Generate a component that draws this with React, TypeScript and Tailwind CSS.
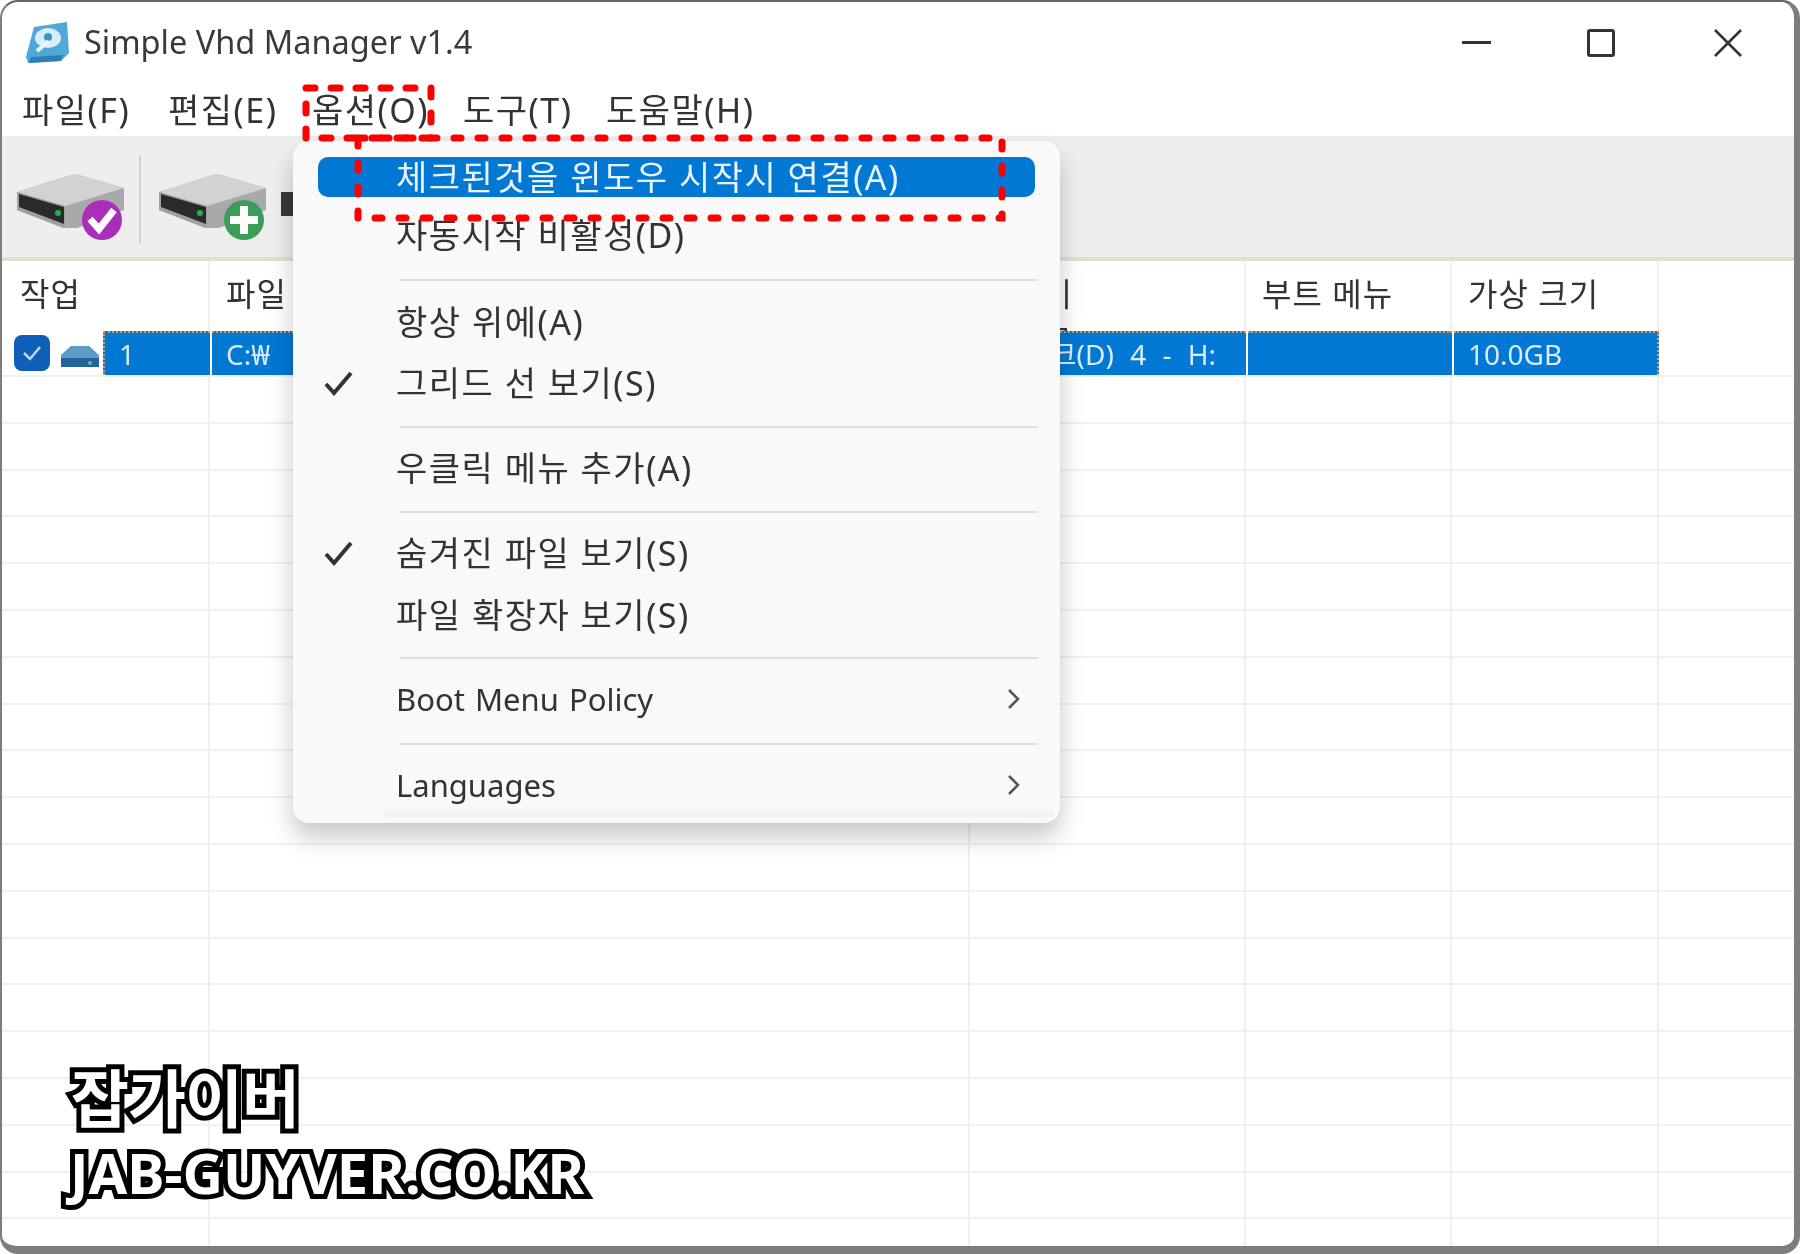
const KR = "font-['Noto_Sans','Noto_Sans_CJK_KR',sans-serif]";
const KO_MENU = "text-[34px] tracking-[1.5px]";
const LATIN_MENU = "text-[31px] [word-spacing:2px]";
const HEAD = "border-r-[2px] border-[#f0f0f0] pt-[9px]";
const SEL = "flex items-center whitespace-nowrap bg-[#0078d4] border-t-[2px] border-dotted border-[#e09a45]";

const gridRows = Array.from({ length: 19 });
const columns = ["w-[208px]", "w-[760px]", "w-[276px]", "w-[206px]", "w-[207px]", "flex-1"];

type MenuRow =
  | { type: "sep"; className: string }
  | { type: "item"; label: string; checked?: boolean; sub?: boolean; active?: boolean; className: string };

const menuRows: MenuRow[] = [
  { type: "item", label: "체크된것을 윈도우 시작시 연결(A)", active: true, className: `h-[40px] ${KO_MENU}` },
  { type: "item", label: "자동시작 비활성(D)", className: `mt-[18px] h-[40px] ${KO_MENU}` },
  { type: "sep", className: "mt-[24px]" },
  { type: "item", label: "항상 위에(A)", className: `mt-[21px] h-[40px] ${KO_MENU}` },
  { type: "item", label: "그리드 선 보기(S)", checked: true, className: `mt-[21px] h-[40px] ${KO_MENU}` },
  { type: "sep", className: "mt-[23px]" },
  { type: "item", label: "우클릭 메뉴 추가(A)", className: `mt-[20px] h-[40px] ${KO_MENU}` },
  { type: "sep", className: "mt-[23px]" },
  { type: "item", label: "숨겨진 파일 보기(S)", checked: true, className: `mt-[20px] h-[40px] ${KO_MENU}` },
  { type: "item", label: "파일 확장자 보기(S)", className: `mt-[22px] h-[40px] ${KO_MENU}` },
  { type: "sep", className: "mt-[22px]" },
  { type: "item", label: "Boot Menu Policy", sub: true, className: `mt-[20px] h-[40px] ${LATIN_MENU}` },
  { type: "sep", className: "mt-[24px]" },
  { type: "item", label: "Languages", sub: true, className: `mt-[20px] h-[40px] ${LATIN_MENU}` },
];

function Drive({ badge }: { badge?: "check" | "plus" }) {
  return (
    <svg width="112" height="70" viewBox="0 0 112 70" className="shrink-0">
      <path d="M2 20 L56 3 Q60 2 64 3 L109 16 L109 38 L62 56 L48 56 L2 38 Z" fill="#a9a9ab" />
      <path d="M2 20 L56 3 Q60 2 64 3 L109 16 L50 34 Z" fill="#d2d2d5" />
      <path d="M2 20 L50 34 L50 56 L2 38 Z" fill="#a0a0a0" />
      <path d="M4 22 L49 35 L49 52 L4 35 Z" fill="#2a2a2a" />
      <circle cx="43" cy="41" r="3" fill="#19b83f" />
      {badge === "check" && (
        <g>
          <circle cx="87" cy="48" r="20" fill="#a92fb8" />
          <path d="M75 47 L84 57 L99 38" fill="none" stroke="#fff" strokeWidth="7" />
        </g>
      )}
      {badge === "plus" && (
        <g>
          <circle cx="87" cy="48" r="20" fill="#3d9c58" />
          <path d="M87 34 V62 M73 48 H101" fill="none" stroke="#fff" strokeWidth="8" />
        </g>
      )}
    </svg>
  );
}

function CheckMark() {
  return (
    <svg width="30" height="26" viewBox="0 0 30 26">
      <path d="M2 14 L10 23 L27 3" fill="none" stroke="#333" strokeWidth="4" />
    </svg>
  );
}

function Chevron() {
  return (
    <svg width="14" height="22" viewBox="0 0 14 22">
      <path d="M2 2 L11 11 L2 20" fill="none" stroke="#555" strokeWidth="2.5" />
    </svg>
  );
}

function OptionsMenu() {
  return (
    <div className="absolute left-[293px] top-[141px] h-[682px] w-[767px] rounded-[16px] bg-[#f9f9f9] pt-[16px] shadow-[0_14px_24px_rgba(0,0,0,0.22)]">
      {menuRows.map((row, i) =>
        row.type === "sep" ? (
          <div key={i} className={`ml-[107px] mr-[22px] h-[2px] bg-[#dfdfdf] ${row.className}`} />
        ) : (
          <div
            key={i}
            className={`mx-[25px] flex items-center rounded-[10px] ${row.className} ${row.active ? "bg-[#0078d4] text-[#e8f3fb]" : "text-[#333]"}`}
          >
            <div className="flex w-[78px] justify-start pl-[6px]">{row.checked && <CheckMark />}</div>
            <span className="flex-1 whitespace-nowrap">{row.label}</span>
            {row.sub && (
              <div className="mr-[14px]">
                <Chevron />
              </div>
            )}
          </div>
        ),
      )}
      <div className="absolute bottom-[6px] left-[92px] right-[6px] h-[7px] bg-[#f3f3f3]" />
    </div>
  );
}

export default function App() {
  return (
    <div className={`relative h-[1254px] w-[1800px] overflow-hidden bg-white text-[#333] ${KR}`}>
      <div className="h-full blur-[0.7px]">
        <div className="flex h-full flex-col overflow-hidden rounded-[18px] border-[2px] border-b-[8px] border-r-[6px] border-[#7d7d7d] border-t-[#666] bg-white">
          {/* Title bar */}
          <div className="flex h-[69px] shrink-0 items-center pl-[23px] pt-[12px]">
            <svg width="46" height="44" viewBox="0 0 46 44" className="shrink-0">
              <path d="M9 6 L42 1 L44 32 L36 40 L3 42 L1 36 Z" fill="#4fa8d8" />
              <path d="M6 36 L38 34 L36 40 L4 42 Z" fill="#2d7fb5" />
              <ellipse cx="23" cy="17" rx="13" ry="10" fill="#d6eefa" />
              <circle cx="23" cy="16" r="4" fill="#3a93c9" />
              <path d="M12 30 L24 20" stroke="#e8f6fd" strokeWidth="4" />
            </svg>
            <span className="ml-[13px] text-[32.5px] text-[#3a3a3a]">Simple Vhd Manager v1.4</span>
            <div className="ml-auto flex items-center pr-[52px]">
              <div className="h-[3px] w-[29px] bg-[#333]" />
              <div className="ml-[96px] h-[28px] w-[28px] rounded-[3px] border-[3px] border-[#333]" />
              <svg width="28" height="28" viewBox="0 0 28 28" className="ml-[99px]">
                <path d="M1 1 L27 27 M27 1 L1 27" stroke="#333" strokeWidth="2.5" />
              </svg>
            </div>
          </div>

          {/* Menu bar */}
          <div className={`flex h-[65px] shrink-0 items-center pl-[20px] pt-[14px] ${KO_MENU}`}>
            <span className="w-[146px]">파일(F)</span>
            <span className="w-[144px]">편집(E)</span>
            <span className="w-[151px]">옵션(O)</span>
            <span className="w-[143px]">도구(T)</span>
            <span>도움말(H)</span>
          </div>

          {/* Toolbar */}
          <div className="flex h-[125px] shrink-0 items-start border-b-[4px] border-[#e3e0d2] bg-[#eeeeee] pl-[13px] pt-[19px]">
            <div className="mt-[17px]">
              <Drive badge="check" />
            </div>
            <div className="ml-[12px] h-[88px] w-[2px] bg-[#d5d5cc]" />
            <div className="ml-[16px] mt-[17px]">
              <Drive badge="plus" />
            </div>
            <div className="ml-[12px] mt-[37px] h-[24px] w-[16px] bg-[#3a3a3a]" />
          </div>

          {/* Header */}
          <div className="flex h-[70px] shrink-0 text-[32px] tracking-[1px]">
            <div className={`${columns[0]} ${HEAD} pl-[18px]`}>작업</div>
            <div className={`${columns[1]} ${HEAD} pl-[16px]`}>파일</div>
            <div className={`${columns[2]} ${HEAD} pr-[171px] text-right`}>볼륨 이름</div>
            <div className={`${columns[3]} ${HEAD} pl-[16px]`}>부트 메뉴</div>
            <div className={`${columns[4]} ${HEAD} pl-[16px]`}>가상 크기</div>
            <div className="flex-1" />
          </div>

          {/* Selected row */}
          <div className="flex h-[46px] shrink-0 border-b-[2px] border-[#f0f0f0] text-[28px] text-[#dcebf8]">
            <div className={`${columns[0]} flex items-center`}>
              <div className="ml-[12px] flex h-[36px] w-[36px] shrink-0 items-center justify-center rounded-[8px] bg-[#0f5fb8]">
                <svg width="20" height="16" viewBox="0 0 20 16">
                  <path d="M2 8 L8 14 L18 2" fill="none" stroke="#bcd7f0" strokeWidth="2.5" />
                </svg>
              </div>
              <svg width="40" height="24" viewBox="0 0 40 24" className="ml-[10px] mt-[8px] shrink-0">
                <path d="M1 10 L11 1 H29 L39 10 V22 H1 Z" fill="#5b9cc9" />
                <rect x="1" y="13" width="38" height="9" fill="#25649a" />
                <circle cx="30" cy="18" r="2" fill="#3dd17a" />
              </svg>
              <div className={`ml-[3px] h-full flex-1 pl-[14px] border-l-[2px] ${SEL}`}>1</div>
            </div>
            <div className={`ml-[2px] w-[758px] pl-[14px] ${SEL}`}>C:₩</div>
            <div className={`ml-[2px] w-[274px] justify-end pr-[30px] [word-spacing:9px] ${SEL}`}>디스크(D) 4 - H:</div>
            <div className={`ml-[2px] w-[204px] ${SEL}`} />
            <div className={`ml-[2px] w-[205px] pl-[14px] border-r-[2px] ${SEL}`}>10.0GB</div>
            <div className="flex-1" />
          </div>

          {/* Empty grid */}
          {gridRows.map((_, r) => (
            <div key={r} className="flex h-[46.8px] shrink-0 border-b-[2px] border-[#f0f0f0]">
              {columns.map((c, i) => (
                <div key={i} className={`${c} ${i < 5 ? "border-r-[2px] border-[#f0f0f0]" : ""}`} />
              ))}
            </div>
          ))}
        </div>

        <OptionsMenu />

        {/* Red dashed callouts */}
        <svg width="1010" height="225" viewBox="0 0 1010 225" className="absolute left-0 top-0">
          <rect x="306" y="88" width="125" height="50" fill="none" stroke="#ff0000" strokeWidth="7" strokeLinecap="round" strokeDasharray="9 16" />
          <rect x="358" y="138" width="644" height="80" fill="none" stroke="#ff0000" strokeWidth="7" strokeLinecap="round" strokeDasharray="7 17" />
        </svg>
      </div>

      {/* Watermark */}
      <div className="absolute left-[71px] top-[1066px] font-bold leading-none text-white">
        <div className="text-[63px] tracking-[-1px] [paint-order:stroke_fill] [-webkit-text-stroke:10px_#000]">잡가이버</div>
        <div className="ml-[-1px] mt-[15px] text-[56px] tracking-[0px] [paint-order:stroke_fill] [-webkit-text-stroke:10px_#000]">JAB-GUYVER.CO.KR</div>
      </div>
    </div>
  );
}
